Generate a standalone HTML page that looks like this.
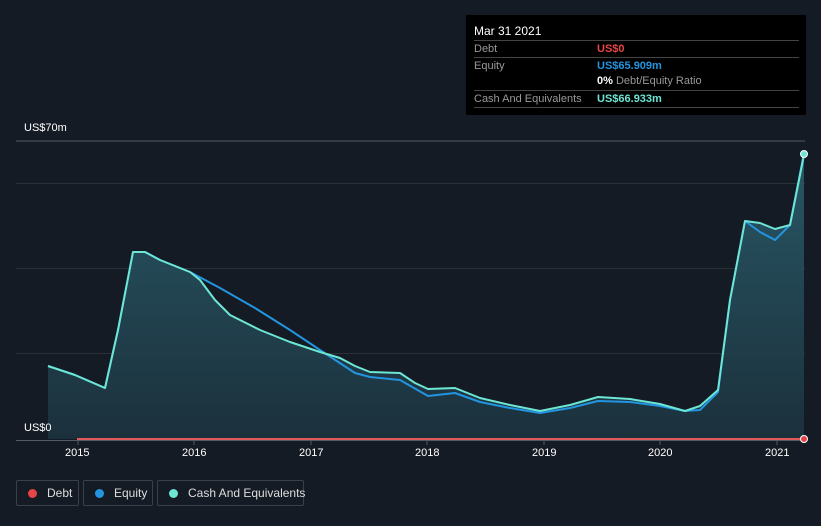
<!DOCTYPE html><html><head><style>
body{margin:0;width:821px;height:526px;background:#151b24;font-family:"Liberation Sans",sans-serif;overflow:hidden;position:relative}
.t{position:absolute;font-size:11px;color:#fff}
.lg{position:absolute;top:480px;height:26px;border:1px solid #3a4049;border-radius:2px;font-size:12px;color:#ddd;line-height:24px;box-sizing:border-box;white-space:nowrap}
.lg i{display:inline-block;width:9px;height:9px;border-radius:50%;margin:0 10px 0 11px;vertical-align:-1px}
.tip{position:absolute;left:466px;top:15px;width:340px;height:100px;background:#000;color:#fff;font-size:11px}
.r{position:absolute;left:8px;width:325px;border-top:1px solid #444;height:17px;line-height:17px;color:#999}
.r b{position:absolute;left:123px;font-weight:bold}
</style></head><body>
<svg width="821" height="526" style="position:absolute;left:0;top:0">
<g stroke="#2a3038" stroke-width="1"><line x1="16" y1="141" x2="805" y2="141" stroke="#555b63"/><line x1="16" y1="183.5" x2="805" y2="183.5"/><line x1="16" y1="268.5" x2="805" y2="268.5"/><line x1="16" y1="353.5" x2="805" y2="353.5"/></g>
<line x1="16" y1="440.5" x2="805" y2="440.5" stroke="#555b63"/>
<g stroke="#555b63"><line x1="78" y1="440" x2="78" y2="445"/><line x1="194" y1="440" x2="194" y2="445"/><line x1="311" y1="440" x2="311" y2="445"/><line x1="427" y1="440" x2="427" y2="445"/><line x1="544" y1="440" x2="544" y2="445"/><line x1="660" y1="440" x2="660" y2="445"/><line x1="777" y1="440" x2="777" y2="445"/></g>
<defs><linearGradient id="g" x1="0" y1="0" x2="0" y2="1"><stop offset="0" stop-color="#2c6170"/><stop offset="1" stop-color="#1c3440"/></linearGradient></defs>
<path d="M48,366 L75,375 L105,388 L118,330 L133,252 L145,252 L160,260 L175,266 L190,272 L200,280 L215,300 L230,315 L260,330 L290,342 L320,352 L340,358 L355,366 L370,372 L400,373 L415,383 L428,389 L455,388 L480,398 L510,405 L540,411 L570,405 L598,397 L630,399 L660,404 L685,411 L700,406 L718,390 L730,300 L745,221 L760,223 L775,229 L790,225 L804,155 L804,439 L48,439Z" fill="url(#g)" opacity=".85"/>
<g fill="none" stroke-width="2" stroke-linejoin="round">
<path d="M48,366 L75,375 L105,388 L118,330 L133,252 L145,252 L160,260 L175,266 L190,272 L220,288 L255,308 L290,330 L320,350 L355,373 L370,377 L400,380 L428,396 L455,393 L480,402 L510,408 L540,413 L570,408 L598,401 L630,402 L660,406 L685,411 L700,410 L718,392 L730,300 L745,221 L760,232 L775,240 L790,225 L804,153" stroke="#2394df"/>
<path d="M48,366 L75,375 L105,388 L118,330 L133,252 L145,252 L160,260 L175,266 L190,272 L200,280 L215,300 L230,315 L260,330 L290,342 L320,352 L340,358 L355,366 L370,372 L400,373 L415,383 L428,389 L455,388 L480,398 L510,405 L540,411 L570,405 L598,397 L630,399 L660,404 L685,411 L700,406 L718,390 L730,300 L745,221 L760,223 L775,229 L790,225 L804,155" stroke="#6ee6d4"/>
</g>
<line x1="77" y1="439" x2="804" y2="439" stroke="#e05a5a" stroke-width="2"/>
<circle cx="804" cy="439" r="3.5" fill="#e64545" stroke="#fff" stroke-width="1"/>
<circle cx="804" cy="154" r="3.5" fill="#6ee6d4" stroke="#fff" stroke-width="1"/>
</svg>
<div class="t" style="left:24px;top:122px">US$70m</div>
<div class="t" style="left:24px;top:422px">US$0</div>
<div class="t" style="left:65px;top:447px">2015</div><div class="t" style="left:182px;top:447px">2016</div><div class="t" style="left:299px;top:447px">2017</div><div class="t" style="left:415px;top:447px">2018</div><div class="t" style="left:532px;top:447px">2019</div><div class="t" style="left:648px;top:447px">2020</div><div class="t" style="left:765px;top:447px">2021</div>
<div class="lg" style="left:16px;width:63px"><i style="background:#e64545"></i>Debt</div>
<div class="lg" style="left:83px;width:70px"><i style="background:#2394df"></i>Equity</div>
<div class="lg" style="left:157px;width:147px"><i style="background:#6ee6d4"></i>Cash And Equivalents</div>
<div class="tip">
<div style="position:absolute;left:8px;top:9px;font-size:12px">Mar 31 2021</div>
<div class="r" style="top:25px">Debt<b style="color:#e64545">US$0</b></div>
<div class="r" style="top:42px">Equity<b style="color:#2394df">US$65.909m</b></div>
<div class="r" style="top:58px;border-top:none"><b style="color:#fff">0% <span style="font-weight:normal;color:#999">Debt/Equity Ratio</span></b></div>
<div class="r" style="top:75px">Cash And Equivalents<b style="color:#6ee6d4">US$66.933m</b></div>
<div class="r" style="top:92px;height:0"></div>
</div>
</body></html>
